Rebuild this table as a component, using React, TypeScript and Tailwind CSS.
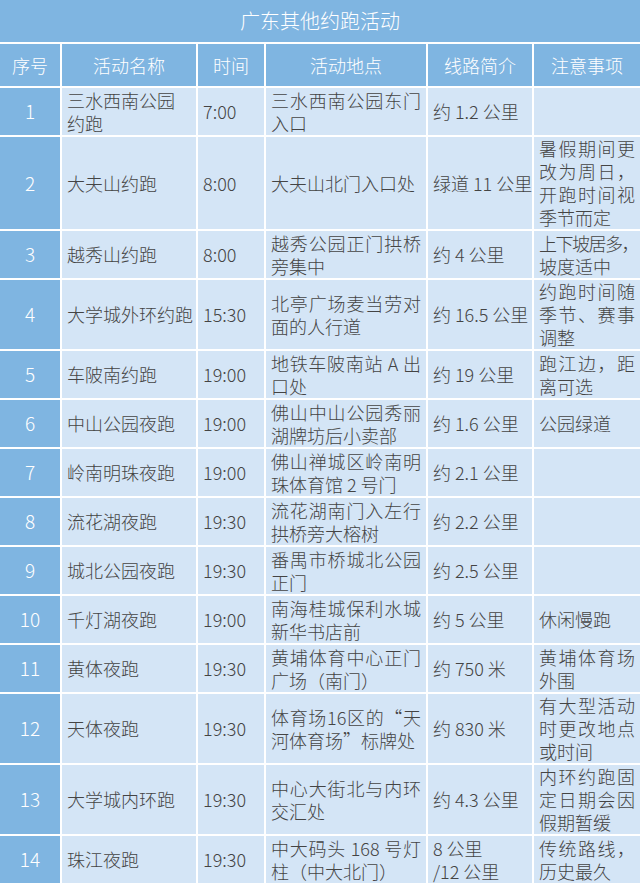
type Row = {
  no: number;
  name: string[];
  time: string;
  place: string[];
  route: string[];
  note: string[];
  h: string;
};

const rows: Row[] = [
  { no: 1, name: ['三水西南公园', '约跑'], time: '7:00', place: ['三水西南公园东门', '入口'], route: ['约 1.2 公里'], note: [], h: 'h-[47px]' },
  { no: 2, name: ['大夫山约跑'], time: '8:00', place: ['大夫山北门入口处'], route: ['绿道 11 公里'], note: ['暑假期间更', '改为周日，', '开跑时间视', '季节而定'], h: 'h-[92px]' },
  { no: 3, name: ['越秀山约跑'], time: '8:00', place: ['越秀公园正门拱桥', '旁集中'], route: ['约 4 公里'], note: ['上下坡居多，', '坡度适中'], h: 'h-[47px]' },
  { no: 4, name: ['大学城外环约跑'], time: '15:30', place: ['北亭广场麦当劳对', '面的人行道'], route: ['约 16.5 公里'], note: ['约跑时间随', '季节、赛事', '调整'], h: 'h-[69px]' },
  { no: 5, name: ['车陂南约跑'], time: '19:00', place: ['地铁车陂南站 A 出', '口处'], route: ['约 19 公里'], note: ['跑江边，距', '离可选'], h: 'h-[47px]' },
  { no: 6, name: ['中山公园夜跑'], time: '19:00', place: ['佛山中山公园秀丽', '湖牌坊后小卖部'], route: ['约 1.6 公里'], note: ['公园绿道'], h: 'h-[47px]' },
  { no: 7, name: ['岭南明珠夜跑'], time: '19:00', place: ['佛山禅城区岭南明', '珠体育馆 2 号门'], route: ['约 2.1 公里'], note: [], h: 'h-[47px]' },
  { no: 8, name: ['流花湖夜跑'], time: '19:30', place: ['流花湖南门入左行', '拱桥旁大榕树'], route: ['约 2.2 公里'], note: [], h: 'h-[47px]' },
  { no: 9, name: ['城北公园夜跑'], time: '19:30', place: ['番禺市桥城北公园', '正门'], route: ['约 2.5 公里'], note: [], h: 'h-[47px]' },
  { no: 10, name: ['千灯湖夜跑'], time: '19:00', place: ['南海桂城保利水城', '新华书店前'], route: ['约 5 公里'], note: ['休闲慢跑'], h: 'h-[47px]' },
  { no: 11, name: ['黄体夜跑'], time: '19:30', place: ['黄埔体育中心正门', '广场（南门）'], route: ['约 750 米'], note: ['黄埔体育场', '外围'], h: 'h-[47px]' },
  { no: 12, name: ['天体夜跑'], time: '19:30', place: ['体育场16区的“天', '河体育场”标牌处'], route: ['约 830 米'], note: ['有大型活动', '时更改地点', '或时间'], h: 'h-[69px]' },
  { no: 13, name: ['大学城内环跑'], time: '19:30', place: ['中心大街北与内环', '交汇处'], route: ['约 4.3 公里'], note: ['内环约跑固', '定日期会因', '假期暂缓'], h: 'h-[69px]' },
  { no: 14, name: ['珠江夜跑'], time: '19:30', place: ['中大码头 168 号灯', '柱（中大北门）'], route: ['8 公里', '/12 公里'], note: ['传统路线，', '历史最久'], h: 'h-[47px]' },
];

const headers = ['序号', '活动名称', '时间', '活动地点', '线路简介', '注意事项'];

// cells with lines; justified lines spread to the cell width except the last
function Cell({ lines, justify }: { lines: string[]; justify?: boolean }) {
  return (
    <div className="bg-[#d4e5f6] px-[5px] flex flex-col justify-center text-[18px] leading-[23px] font-light text-[#444]">
      {lines.map((l, i) => {
        const last = i === lines.length - 1;
        const long = l.length > 5 && l.endsWith('，');
        return (
          <div
            key={i}
            className={
              long
                ? 'whitespace-nowrap tracking-[-1.5px]'
                : justify && !last
                ? 'text-justify [text-align-last:justify]'
                : 'whitespace-nowrap'
            }
          >
            {l}
          </div>
        );
      })}
    </div>
  );
}

export default function App() {
  return (
    <div
      lang="zh-CN"
      className="w-[640px] h-[885px] overflow-hidden bg-white flex flex-col gap-[2px]"
      style={{ fontFamily: '"Noto Sans CJK SC", "Noto Sans", sans-serif' }}
    >
      <div className="h-[42px] shrink-0 bg-[#7fb5e1] flex items-center justify-center text-white text-[20px] font-light">
        广东其他约跑活动
      </div>

      <div className="grid grid-cols-[60px_134px_66px_160px_104px_1fr] gap-[2px] h-[42px] shrink-0">
        {headers.map((h) => (
          <div key={h} className="bg-[#7fb5e1] text-white text-[18px] font-light flex items-center justify-center">
            {h}
          </div>
        ))}
      </div>

      {rows.map((r) => (
        <div key={r.no} className={`grid grid-cols-[60px_134px_66px_160px_104px_1fr] gap-[2px] shrink-0 ${r.h}`}>
          <div className="bg-[#7fb5e1] text-white text-[19px] font-light flex items-center justify-center">{r.no}</div>
          <Cell lines={r.name} />
          <Cell lines={[r.time]} />
          <Cell lines={r.place} justify />
          <Cell lines={r.route} />
          <Cell lines={r.note} justify />
        </div>
      ))}
    </div>
  );
}
